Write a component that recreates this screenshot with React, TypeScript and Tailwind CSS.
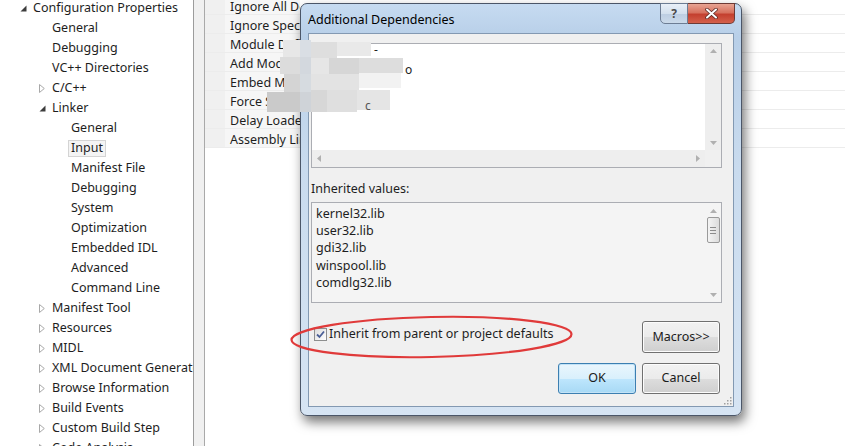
const treeItems: { t: string; l: number; e?: "open" | "closed"; sel?: boolean }[] = [
  { t: "Configuration Properties", l: 0, e: "open" },
  { t: "General", l: 1 },
  { t: "Debugging", l: 1 },
  { t: "VC++ Directories", l: 1 },
  { t: "C/C++", l: 1, e: "closed" },
  { t: "Linker", l: 1, e: "open" },
  { t: "General", l: 2 },
  { t: "Input", l: 2, sel: true },
  { t: "Manifest File", l: 2 },
  { t: "Debugging", l: 2 },
  { t: "System", l: 2 },
  { t: "Optimization", l: 2 },
  { t: "Embedded IDL", l: 2 },
  { t: "Advanced", l: 2 },
  { t: "Command Line", l: 2 },
  { t: "Manifest Tool", l: 1, e: "closed" },
  { t: "Resources", l: 1, e: "closed" },
  { t: "MIDL", l: 1, e: "closed" },
  { t: "XML Document Generator", l: 1, e: "closed" },
  { t: "Browse Information", l: 1, e: "closed" },
  { t: "Build Events", l: 1, e: "closed" },
  { t: "Custom Build Step", l: 1, e: "closed" },
  { t: "Code Analysis", l: 1, e: "closed" },
];

const indent = ["pl-[18px]", "pl-[37px]", "pl-[56px]"];

const props = [
  "Ignore All Default Libraries",
  "Ignore Specific Default Libraries",
  "Module Definition File",
  "Add Module to Assembly",
  "Embed Managed Resource File",
  "Force Symbol References",
  "Delay Loaded Dlls",
  "Assembly Link Resource",
];

const inherited = ["kernel32.lib", "user32.lib", "gdi32.lib", "winspool.lib", "comdlg32.lib"];

// pixelated patch over the hidden entries
const mosaic: [number, number, number, number, string][] = [
  [283, 40, 17, 17, "#e7e7e7"],
  [300, 40, 11, 17, "#d9dee4"],
  [311, 42, 26, 16, "#dedede"],
  [337, 42, 34, 14, "#e9e9e9"],
  [280, 57, 20, 17, "#dcdcdc"],
  [300, 57, 11, 17, "#d3d8de"],
  [311, 58, 18, 16, "#e6e6e6"],
  [329, 58, 30, 16, "#d6d6d6"],
  [359, 58, 44, 15, "#dddddd"],
  [284, 74, 16, 18, "#d4d4d4"],
  [300, 74, 11, 18, "#d6dbe0"],
  [311, 74, 48, 16, "#e3e3e3"],
  [359, 73, 42, 15, "#f2f2f2"],
  [267, 92, 33, 20, "#cacaca"],
  [300, 92, 11, 20, "#cfd3d8"],
  [311, 90, 16, 22, "#d7d7d7"],
  [327, 90, 30, 22, "#dfdfdf"],
  [357, 90, 33, 20, "#e5e5e5"],
];

function Tri({ open }: { open?: boolean }) {
  return open ? (
    <svg width="7" height="7" viewBox="0 0 7 7">
      <path d="M6.5 0.5 L6.5 6.5 L0.5 6.5 Z" fill="#3c3c3c" />
    </svg>
  ) : (
    <svg width="6" height="9" viewBox="0 0 6 9">
      <path d="M0.5 0.5 L5.3 4.5 L0.5 8.5 Z" fill="#fff" stroke="#a8a8a8" />
    </svg>
  );
}

function Arrow({ dir }: { dir: "up" | "down" | "left" | "right" }) {
  const d = {
    up: "M0 4 L3.5 0 L7 4 Z",
    down: "M0 0 L7 0 L3.5 4 Z",
    left: "M4 0 L4 7 L0 3.5 Z",
    right: "M0 0 L4 3.5 L0 7 Z",
  }[dir];
  const vert = dir === "up" || dir === "down";
  return (
    <svg width={vert ? 7 : 4} height={vert ? 4 : 7} viewBox={vert ? "0 0 7 4" : "0 0 4 7"}>
      <path d={d} fill="#b0b0b0" />
    </svg>
  );
}

function Button({ label, primary, className }: { label: string; primary?: boolean; className?: string }) {
  return (
    <div
      className={
        "w-[78px] flex items-center justify-center rounded-[3px] border text-[12.5px] text-[#1b1b1b] " +
        (primary
          ? "border-[#3c7fb1] bg-[linear-gradient(#eaf6fd_0%,#d9f0fc_50%,#bee6fd_51%,#a7d9f5_100%)] shadow-[inset_0_0_0_1px_#c3e3f7] "
          : "border-[#707070] bg-[linear-gradient(#f2f2f2_0%,#ebebeb_50%,#dddddd_51%,#cfcfcf_100%)] shadow-[inset_0_0_0_1px_#fcfcfc] ") +
        (className ?? "")
      }
    >
      {label}
    </div>
  );
}

function Dialog() {
  return (
    <div className="absolute left-[300px] top-[3px] w-[442px] h-[413px] rounded-[7px] border border-[#4b5668] bg-[linear-gradient(#c6dbf1_0%,#b8cfe8_8%,#c9dbee_40%,#d6e4f3_100%)] shadow-[3px_6px_12px_rgba(0,0,0,0.55)] flex flex-col px-[7px] pt-[29px] pb-[8px]">
      <div className="absolute left-[7px] top-[7px] text-[12.5px] text-black">Additional Dependencies</div>
      <div className="absolute right-[6px] top-[-1px] flex">
        <div className="w-[28px] h-[21px] rounded-bl-[5px] border border-[#6d7d94] bg-[linear-gradient(#e9f0f8_0%,#d3e0ee_50%,#bccde2_51%,#cbdaea_100%)] flex items-center justify-center text-[12px] font-bold text-[#4a4a4a]">
          ?
        </div>
        <div className="w-[47px] h-[21px] rounded-br-[5px] border border-l-0 border-[#6d3a35] bg-[linear-gradient(#e8a493_0%,#d7725f_45%,#c4402f_55%,#d4604b_100%)] flex items-center justify-center">
          <svg width="13" height="11" viewBox="0 0 13 11">
            <path d="M2 1.5 L11 9.5 M11 1.5 L2 9.5" stroke="#5a2a24" strokeWidth="3.6" strokeLinecap="round" />
            <path d="M2 1.5 L11 9.5 M11 1.5 L2 9.5" stroke="#ffffff" strokeWidth="2" strokeLinecap="round" />
          </svg>
        </div>
      </div>

      <div className="relative flex-1 border border-[#8399b2] bg-[#f0f0f0] flex flex-col pl-[2px] pr-[11px] pt-[9px]">
        {/* editable box */}
        <div className="h-[125px] border border-[#abadb3] bg-white flex flex-col">
          <div className="flex flex-1">
            <div className="flex-1" />
            <div className="w-[16px] bg-[#eeeeee] flex flex-col items-center justify-between py-[5px]">
              <Arrow dir="up" />
              <Arrow dir="down" />
            </div>
          </div>
          <div className="h-[17px] flex">
            <div className="flex-1 bg-[#eeeeee] flex items-center justify-between px-[5px]">
              <Arrow dir="left" />
              <Arrow dir="right" />
            </div>
            <div className="w-[16px] bg-[#f0f0f0]" />
          </div>
        </div>

        <div className="mt-[12px] h-[18px] leading-[18px] text-[12.5px] text-[#1e1e1e]">Inherited values:</div>

        <div className="mt-[4px] h-[101px] border border-[#abadb3] bg-[#f4f4f4] flex">
          <div className="flex-1 pt-[2px] pl-[4px] text-[12.5px] text-[#1e1e1e] leading-[17.2px]">
            {inherited.map((s) => (
              <div key={s}>{s}</div>
            ))}
          </div>
          <div className="w-[16px] flex flex-col items-center pt-[6px] pb-[5px]">
            <Arrow dir="up" />
            <div className="mt-[4px] w-[13px] h-[26px] rounded-[2px] border border-[#9a9a9a] bg-[linear-gradient(90deg,#f4f4f4,#dcdcdc)] flex flex-col items-center justify-center gap-[2px]">
              <div className="w-[6px] h-px bg-[#8c8c8c]" />
              <div className="w-[6px] h-px bg-[#8c8c8c]" />
              <div className="w-[6px] h-px bg-[#8c8c8c]" />
            </div>
            <div className="flex-1" />
            <Arrow dir="down" />
          </div>
        </div>

        <div className="mt-[18px] h-[32px] flex justify-between pr-[2px]">
          <div className="ml-[3px] h-[18px] flex items-center gap-[2px] text-[12.5px] text-[#1e1e1e] mt-[4px]">
            <div className="w-[13px] h-[13px] border border-[#8e8f8f] bg-[linear-gradient(135deg,#dcdcdc,#ffffff)] flex items-center justify-center">
              <svg width="9" height="9" viewBox="0 0 9 9">
                <path d="M1 4.5 L3.5 7 L8 1.5" fill="none" stroke="#4a5f97" strokeWidth="1.8" />
              </svg>
            </div>
            <span>Inherit from parent or project defaults</span>
          </div>
          <Button label="Macros>>" />
        </div>

        <div className="mt-[10px] h-[31px] flex justify-end gap-[6px] pr-[2px]">
          <Button label="OK" primary />
          <Button label="Cancel" />
        </div>

        <svg className="absolute right-[1px] bottom-[1px]" width="10" height="10" viewBox="0 0 10 10">
          <g fill="#a0a0a0">
            <rect x="8" y="2" width="1.5" height="1.5" />
            <rect x="5" y="5" width="1.5" height="1.5" />
            <rect x="8" y="5" width="1.5" height="1.5" />
            <rect x="2" y="8" width="1.5" height="1.5" />
            <rect x="5" y="8" width="1.5" height="1.5" />
            <rect x="8" y="8" width="1.5" height="1.5" />
          </g>
        </svg>
      </div>
    </div>
  );
}

export default function App() {
  return (
    <div className="relative w-[845px] h-[446px] overflow-hidden bg-white flex font-['Noto_Sans',sans-serif] text-[12.5px] text-[#1e1e1e]">
      {/* tree */}
      <div className="w-[194px] shrink-0 border-r border-[#9c9c9c] overflow-hidden">
        <div className="mt-[-2px]">
          {treeItems.map((it, i) => (
            <div key={i} className={"h-[20px] flex items-center whitespace-nowrap " + indent[it.l]}>
              <span className="w-[15px] shrink-0 flex items-center pl-[2px]">
                {it.e && <Tri open={it.e === "open"} />}
              </span>
              {it.sel ? (
                <span className="h-[17px] -ml-[3px] px-[2px] flex items-center border border-[#d4d4d4] bg-[#f4f4f4]">{it.t}</span>
              ) : (
                <span>{it.t}</span>
              )}
            </div>
          ))}
        </div>
      </div>
      <div className="w-[11px] shrink-0 bg-[#f0f0f0] border-r border-[#a9a9a9]" />

      {/* property grid */}
      <div className="flex-1 flex flex-col mt-[-4px]">
        {props.map((p) => (
          <div key={p} className="h-[19px] flex border-b border-[#ececec]">
            <div className="w-[20px] bg-[#f0f0f0]" />
            <div className="w-[75px] bg-[#f6f6f6] pl-[5px] pt-[4px] flex items-center whitespace-nowrap overflow-hidden">{p}</div>
            <div className="flex-1 bg-white" />
          </div>
        ))}
      </div>

      <Dialog />

      {/* mosaic over the blurred entries */}
      <div className="absolute inset-0 pointer-events-none">
        {mosaic.map(([x, y, w, h, c], i) => (
          <div key={i} className="absolute" style={{ left: x, top: y, width: w, height: h, background: c }} />
        ))}
        <span className="absolute left-[374px] top-[44px] text-[12px] leading-none text-[#222]">-</span>
        <span className="absolute left-[405px] top-[64px] text-[12px] leading-none text-[#222]">o</span>
        <span className="absolute left-[365px] top-[100px] text-[12px] leading-none text-[#555]">c</span>
      </div>

      {/* red annotation */}
      <svg className="absolute left-[288px] top-[314px]" width="288" height="48" viewBox="0 0 288 48">
        <ellipse cx="143.5" cy="23" rx="140" ry="20" fill="none" stroke="#e03a3a" strokeWidth="2.2" transform="rotate(-1.2 143.5 23)" />
      </svg>
    </div>
  );
}
